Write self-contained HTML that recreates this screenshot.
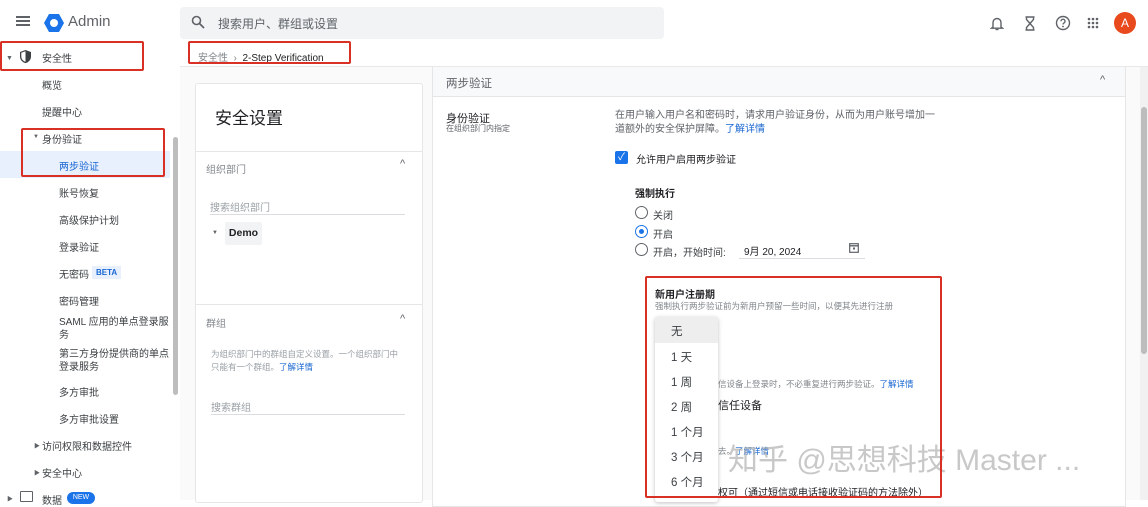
<!DOCTYPE html>
<html><head><meta charset="utf-8"><style>
*{margin:0;padding:0;box-sizing:border-box}
body{width:1148px;height:500px;overflow:hidden;background:#fff;font-family:"Liberation Sans","Noto Sans CJK SC",sans-serif;color:#3c4043;position:relative}
.a{position:absolute;white-space:nowrap}
.s{font-size:10px}
.nav{font-size:10px;color:#3c4043}
.red{position:absolute;border:2px solid #d93025;border-radius:2px}
.radio{position:absolute;width:13px;height:13px;border:1.5px solid #5f6368;border-radius:50%}
.dd{font-size:11.5px;color:#3c4043}
</style></head><body>
<div class="a" style="left:16px;top:16px;width:14px;height:2px;background:#5f6368;box-shadow:0 4px 0 #5f6368,0 8px 0 #5f6368"></div>
<svg class="a" style="left:43px;top:13px" width="22" height="20" viewBox="0 0 22 20"><polygon points="6,1 16,1 21,10 16,19 6,19 1,10" fill="#1a73e8"/><circle cx="11" cy="10" r="4" fill="#fff"/></svg>
<div class="a" style="left:68px;top:13px;font-size:15px;color:#5f6368">Admin</div>
<div class="a" style="left:180px;top:7px;width:484px;height:32px;background:#f1f3f4;border-radius:4px"></div>
<svg class="a" style="left:191px;top:15px" width="14" height="14" viewBox="0 0 14 14"><circle cx="5.5" cy="5.5" r="4" fill="none" stroke="#5f6368" stroke-width="1.6"/><line x1="8.5" y1="8.5" x2="13" y2="13" stroke="#5f6368" stroke-width="1.8"/></svg>
<div class="a" style="left:218px;top:15px;font-size:12px;color:#5f6368">搜索用户、群组或设置</div>
<svg class="a" style="left:990px;top:16px" width="14" height="15" viewBox="0 0 14 15"><path d="M3 11V6.5a4 4 0 0 1 8 0V11l1.5 1.2h-11Z" fill="none" stroke="#5f6368" stroke-width="1.4"/><path d="M5.5 13.5h3" stroke="#5f6368" stroke-width="1.4"/></svg>
<svg class="a" style="left:1024px;top:16px" width="12" height="15" viewBox="0 0 12 15"><path d="M1.5 1h9M1.5 14h9M2.5 1v2.5L6 7.5 9.5 3.5V1M2.5 14v-2.5L6 7.5l3.5 4V14" fill="none" stroke="#5f6368" stroke-width="1.4"/></svg>
<svg class="a" style="left:1055px;top:15px" width="16" height="16" viewBox="0 0 16 16"><circle cx="8" cy="8" r="6.5" fill="none" stroke="#5f6368" stroke-width="1.4"/><path d="M6 6.3a2 2 0 1 1 2.8 1.8c-.6.3-.8.7-.8 1.4" fill="none" stroke="#5f6368" stroke-width="1.3"/><circle cx="8" cy="11.5" r=".9" fill="#5f6368"/></svg>
<svg class="a" style="left:1087px;top:17px" width="12" height="12" viewBox="0 0 12 12" fill="#5f6368"><circle cx="2" cy="2" r="1.3"/><circle cx="6" cy="2" r="1.3"/><circle cx="10" cy="2" r="1.3"/><circle cx="2" cy="6" r="1.3"/><circle cx="6" cy="6" r="1.3"/><circle cx="10" cy="6" r="1.3"/><circle cx="2" cy="10" r="1.3"/><circle cx="6" cy="10" r="1.3"/><circle cx="10" cy="10" r="1.3"/></svg>
<div class="a" style="left:1114px;top:12px;width:22px;height:22px;border-radius:50%;background:#e8491d;color:#fff;font-size:12px;text-align:center;line-height:22px">A</div>

<div class="a" style="left:6px;top:55px;font-size:7px;color:#5f6368">▼</div>
<svg class="a" style="left:19px;top:49px" width="13" height="15" viewBox="0 0 13 15"><path d="M6.5 1 12 3v4.5c0 3.3-2.4 5.8-5.5 6.6C3.4 13.3 1 10.8 1 7.5V3Z" fill="#3c4043"/><path d="M6.5 2.3V12.8C4 12 2.3 10 2.3 7.5V3.8Z" fill="#fff"/></svg>
<div class="a nav" style="left:42px;top:50px">安全性</div>
<div class="a nav" style="left:42px;top:77px">概览</div>
<div class="a nav" style="left:42px;top:104px">提醒中心</div>
<div class="a" style="left:33px;top:134px;font-size:6px;color:#5f6368">▼</div>
<div class="a nav" style="left:42px;top:131px">身份验证</div>
<div class="a" style="left:0;top:151px;width:170px;height:27px;background:#e8f0fe"></div>
<div class="a nav" style="left:59px;top:158px;color:#1967d2">两步验证</div>
<div class="a nav" style="left:59px;top:185px">账号恢复</div>
<div class="a nav" style="left:59px;top:212px">高级保护计划</div>
<div class="a nav" style="left:59px;top:239px">登录验证</div>
<div class="a nav" style="left:59px;top:266px">无密码</div>
<div class="a" style="left:92px;top:266px;font-size:8px;font-weight:bold;color:#1967d2;background:#e8f0fe;padding:2px 4px">BETA</div>
<div class="a nav" style="left:59px;top:316px;line-height:13px">SAML 应用的单点登录服<br>务</div>
<div class="a nav" style="left:59px;top:348px;line-height:13px">第三方身份提供商的单点<br>登录服务</div>
<div class="a nav" style="left:59px;top:293px">密码管理</div>
<div class="a nav" style="left:59px;top:384px">多方审批</div>
<div class="a nav" style="left:59px;top:411px">多方审批设置</div>
<div class="a" style="left:34px;top:441px;font-size:6px;color:#5f6368">▶</div>
<div class="a nav" style="left:42px;top:438px">访问权限和数据控件</div>
<div class="a" style="left:34px;top:468px;font-size:6px;color:#5f6368">▶</div>
<div class="a nav" style="left:42px;top:465px">安全中心</div>
<div class="a" style="left:7px;top:494px;font-size:6px;color:#5f6368">▶</div>
<div class="a" style="left:20px;top:491px;width:13px;height:11px;border:1.5px solid #5f6368;border-radius:1px"></div>
<div class="a nav" style="left:42px;top:492px">数据</div>
<div class="a" style="left:67px;top:492px;width:28px;height:12px;border-radius:6px;background:#1a73e8;color:#fff;font-size:7px;text-align:center;line-height:12px">NEW</div>
<div class="a" style="left:173px;top:137px;width:5px;height:258px;border-radius:3px;background:#bdbdbd"></div>

<div class="a" style="left:180px;top:40px;width:968px;height:460px;background:#fafafa"></div>
<div class="a" style="left:180px;top:40px;width:968px;height:27px;background:#fff;border-bottom:1px solid #e8e8e8"></div>
<div class="a" style="left:198px;top:49px;font-size:10px;color:#80868b">安全性 &nbsp;›&nbsp; <span style="color:#202124">2-Step Verification</span></div>

<div class="a" style="left:195px;top:83px;width:228px;height:420px;background:#fff;border:1px solid #e6e6e6;border-radius:3px"></div>
<div class="a" style="left:215px;top:104px;font-size:17px;color:#202124">安全设置</div>
<div class="a" style="left:196px;top:151px;width:226px;height:1px;background:#e6e6e6"></div>
<div class="a s" style="left:206px;top:161px;color:#80868b">组织部门</div>
<div class="a" style="left:400px;top:158px;font-size:11px;color:#5f6368">^</div>
<div class="a s" style="left:210px;top:199px;color:#9aa0a6">搜索组织部门</div>
<div class="a" style="left:210px;top:214px;width:195px;height:1px;background:#dadce0"></div>
<div class="a" style="left:212px;top:230px;font-size:6px;color:#5f6368">▼</div>
<div class="a" style="left:225px;top:222px;width:37px;height:23px;background:#f1f3f4;border-radius:2px;font-size:10.5px;font-weight:bold;color:#202124;text-align:center;line-height:23px">Demo</div>
<div class="a" style="left:196px;top:304px;width:226px;height:1px;background:#e6e6e6"></div>
<div class="a s" style="left:206px;top:315px;color:#80868b">群组</div>
<div class="a" style="left:400px;top:313px;font-size:11px;color:#5f6368">^</div>
<div class="a" style="left:211px;top:348px;font-size:8.5px;color:#9aa0a6;line-height:13px">为组织部门中的群组自定义设置。一个组织部门中<br>只能有一个群组。<span style="color:#1967d2">了解详情</span></div>
<div class="a s" style="left:211px;top:399px;color:#9aa0a6">搜索群组</div>
<div class="a" style="left:211px;top:414px;width:194px;height:1px;background:#dadce0"></div>

<div class="a" style="left:432px;top:67px;width:694px;height:440px;background:#fff;border:1px solid #e6e6e6"></div>
<div class="a" style="left:433px;top:67px;width:692px;height:30px;background:#f8f9fa;border-bottom:1px solid #e6e6e6"></div>
<div class="a" style="left:446px;top:75px;font-size:11.5px;color:#5f6368">两步验证</div>
<div class="a" style="left:1100px;top:74px;font-size:11px;color:#5f6368">^</div>
<div class="a" style="left:446px;top:110px;font-size:11px;color:#202124">身份验证</div>
<div class="a" style="left:446px;top:123px;font-size:8px;color:#5f6368">在组织部门内指定</div>
<div class="a s" style="left:615px;top:109px;color:#5f6368;line-height:14px">在用户输入用户名和密码时，请求用户验证身份，从而为用户账号增加一<br>道额外的安全保护屏障。<span style="color:#1967d2">了解详情</span></div>
<div class="a" style="left:615px;top:151px;width:13px;height:13px;background:#1a73e8;border-radius:2px;color:#fff;font-size:10px;text-align:center;line-height:13px">✓</div>
<div class="a s" style="left:636px;top:151px;color:#202124">允许用户启用两步验证</div>
<div class="a s" style="left:635px;top:185px;color:#202124;font-weight:bold">强制执行</div>
<div class="radio" style="left:635px;top:206px"></div><div class="a s" style="left:653px;top:207px">关闭</div>
<div class="radio" style="left:635px;top:225px;border-color:#1a73e8"><div style="position:absolute;left:2.5px;top:2.5px;width:5px;height:5px;border-radius:50%;background:#1a73e8"></div></div><div class="a s" style="left:653px;top:226px">开启</div>
<div class="radio" style="left:635px;top:243px"></div><div class="a s" style="left:653px;top:244px">开启，开始时间:</div>
<div class="a s" style="left:744px;top:243px;color:#202124">9月 20, 2024</div>
<svg class="a" style="left:849px;top:242px" width="10" height="11" viewBox="0 0 10 11"><rect x=".7" y="1.7" width="8.6" height="8.6" fill="none" stroke="#5f6368" stroke-width="1.2"/><path d="M.7 3.8h8.6" stroke="#5f6368" stroke-width="1.4"/><rect x="4" y="5.5" width="2" height="2" fill="#5f6368"/></svg>
<div class="a" style="left:739px;top:258px;width:126px;height:1px;background:#dadce0"></div>

<div class="a s" style="left:655px;top:286px;color:#202124;font-weight:bold">新用户注册期</div>
<div class="a" style="left:655px;top:300px;font-size:8.5px;color:#80868b">强制执行两步验证前为新用户预留一些时间，以便其先进行注册</div>
<div class="a" style="left:718px;top:378px;font-size:8.5px;color:#80868b">信设备上登录时，不必重复进行两步验证。<span style="color:#1967d2">了解详情</span></div>
<div class="a" style="left:718px;top:397px;font-size:11px;color:#202124">信任设备</div>
<div class="a" style="left:718px;top:445px;font-size:8.5px;color:#80868b">去。<span style="color:#1967d2">了解详情</span></div>
<div class="a" style="left:718px;top:484px;font-size:10px;color:#202124">权可（通过短信或电话接收验证码的方法除外）</div>
<div class="a" style="left:655px;top:317px;width:63px;height:185px;background:#fff;box-shadow:0 1px 4px rgba(0,0,0,.25);border-radius:3px"></div>
<div class="a" style="left:655px;top:317px;width:63px;height:26px;background:#eeeeee"></div>
<div class="a dd" style="left:671px;top:323px">无</div>
<div class="a dd" style="left:671px;top:349px">1 天</div>
<div class="a dd" style="left:671px;top:374px">1 周</div>
<div class="a dd" style="left:671px;top:399px">2 周</div>
<div class="a dd" style="left:671px;top:424px">1 个月</div>
<div class="a dd" style="left:671px;top:449px">3 个月</div>
<div class="a dd" style="left:671px;top:474px">6 个月</div>

<div class="a" style="left:728px;top:435px;font-size:30px;color:rgba(170,170,170,.65)">知乎 @思想科技 Master ...</div>

<div class="a" style="left:1140px;top:67px;width:8px;height:433px;background:#f1f1f1"></div>
<div class="a" style="left:1141px;top:107px;width:6px;height:247px;background:#bdbdbd;border-radius:3px"></div>

<div class="red" style="left:0;top:41px;width:144px;height:30px"></div>
<div class="red" style="left:21px;top:128px;width:144px;height:49px"></div>
<div class="red" style="left:188px;top:41px;width:163px;height:23px"></div>
<div class="red" style="left:645px;top:276px;width:297px;height:222px"></div>
</body></html>
